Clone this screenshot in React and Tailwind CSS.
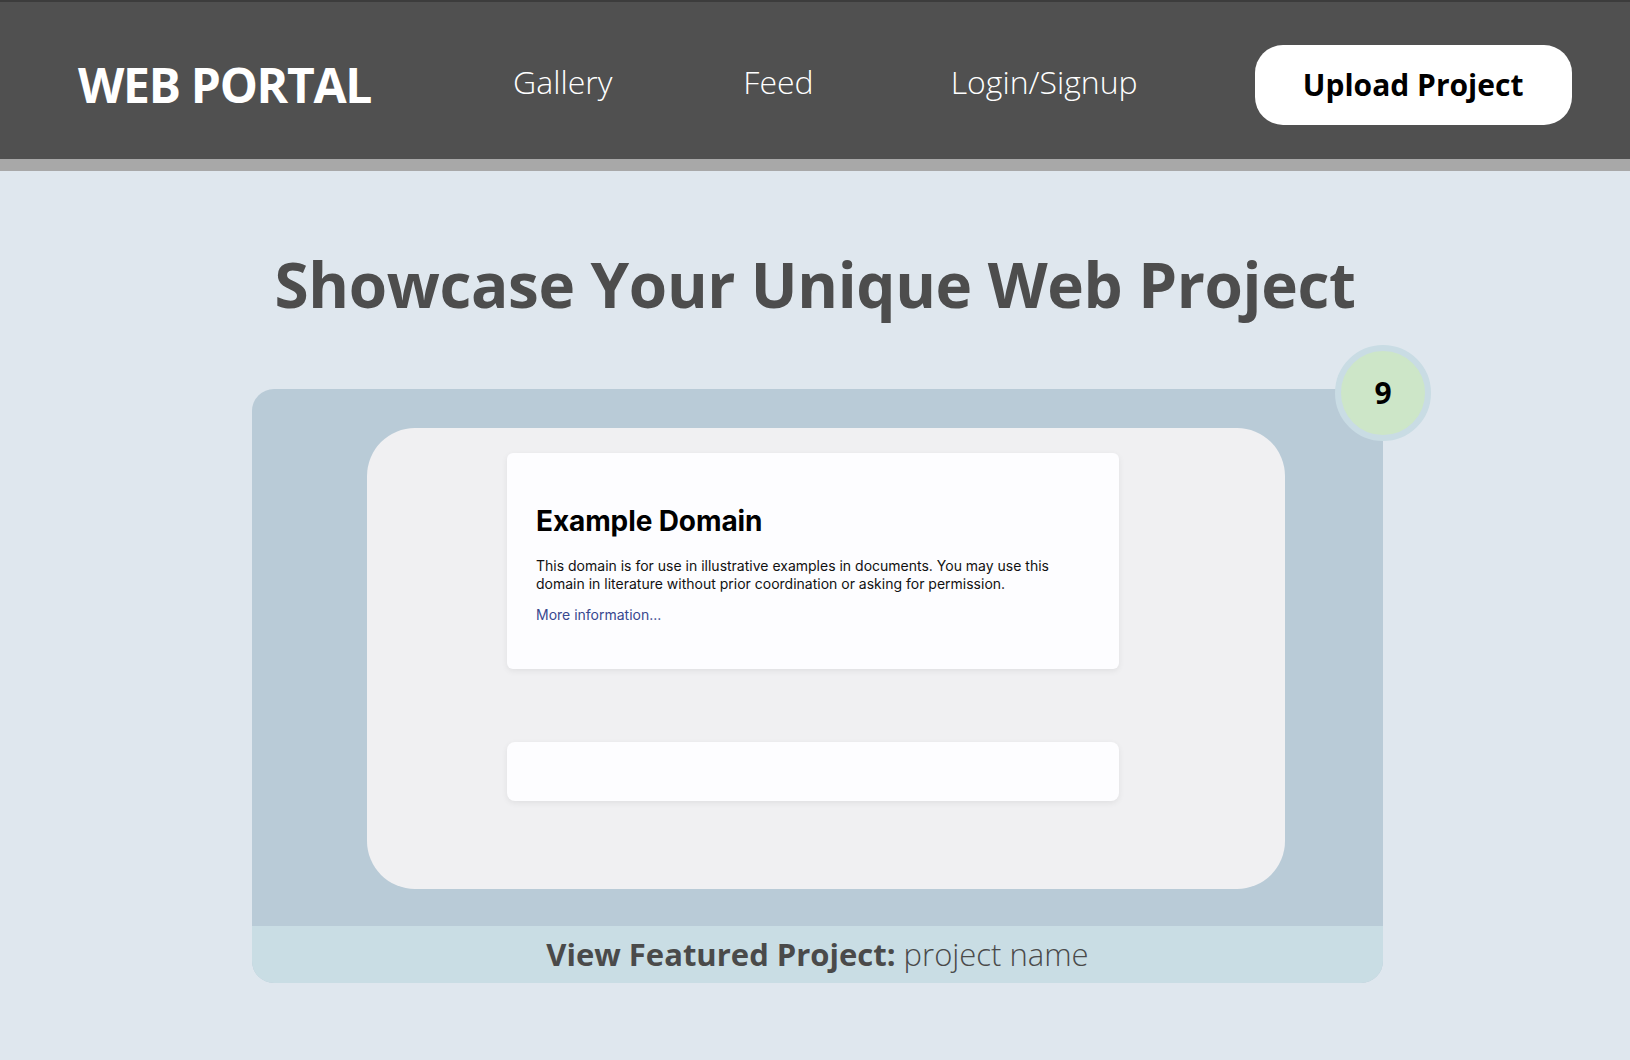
export default function App() {
  const os = { fontFamily: '"Open Sans", "Liberation Sans", sans-serif' };
  return (
    <div className="w-[1630px] h-[1060px] bg-[#dfe7ee] overflow-hidden" style={os}>
      <header className="h-[159px] bg-[#505050] border-t-2 border-[#3c3c3c] flex items-center pt-2 pl-[78px]">
        <div className="text-white font-bold text-[48px] leading-none whitespace-nowrap tracking-[-1.3px]">WEB PORTAL</div>
        <a className="ml-[142px] mb-[6px] text-white font-light text-[32px] leading-none">Gallery</a>
        <a className="ml-[131px] mb-[6px] text-white font-light text-[32px] leading-none">Feed</a>
        <a className="ml-[137px] mb-[6px] text-white font-light text-[32px] leading-none whitespace-nowrap">Login/Signup</a>
        <button className="ml-[117px] w-[317px] h-[80px] rounded-[28px] bg-white text-black font-bold text-[30px] leading-none">
          Upload Project
        </button>
      </header>
      <div className="h-[12px] bg-[#a8a8a8]" />
      <main className="flex flex-col items-center">
        <h1 className="mt-[70px] text-[62px] leading-[86px] font-bold text-[#4d4d4d] whitespace-nowrap tracking-[-0.35px]">
          Showcase Your Unique Web Project
        </h1>
        <section className="mt-[62px] w-[1131px] ml-[5px] relative rounded-[22px] bg-[#b9cbd7]">
          <div className="absolute -top-[44px] -right-[48px] w-[96px] h-[96px] rounded-full border-[6px] border-[#c9dce4] bg-[#cde6c8] flex items-center justify-center">
            <span className="text-black font-bold text-[30px] leading-none">9</span>
          </div>
          <div className="pt-[39px] pl-[115px] pb-[37px]">
            <div className="w-[918px] h-[461px] rounded-[48px] bg-[#f0f0f2] pt-[25px] pl-[140px]">
              <div
                className="w-[612px] h-[216px] rounded-[6px] bg-[#fdfdff] shadow-[0_2px_6px_rgba(0,0,0,0.07)] pt-[51px] pl-[29px]"
                style={{ fontFamily: 'Inter, "Liberation Sans", sans-serif' }}
              >
                <div className="text-[28px] leading-[34px] font-bold text-black tracking-[-0.1px]">Example Domain</div>
                <p className="mt-[19px] text-[14px] leading-[18px] text-[#111]">
                  This domain is for use in illustrative examples in documents. You may use this
                  <br />
                  domain in literature without prior coordination or asking for permission.
                </p>
                <p className="mt-[13px] text-[14px] leading-[18px] text-[#38488f]">More information...</p>
              </div>
              <div className="mt-[73px] w-[612px] h-[59px] rounded-[8px] bg-[#fdfdff] shadow-[0_2px_6px_rgba(0,0,0,0.07)]" />
            </div>
          </div>
          <div className="h-[57px] rounded-b-[22px] bg-[#c9dde4] flex items-center justify-center text-[31px] leading-none text-[#4a4a4a] whitespace-nowrap">
            <span className="font-bold">View Featured Project:</span>
            <span className="font-light">&nbsp;project name</span>
          </div>
        </section>
      </main>
    </div>
  );
}
